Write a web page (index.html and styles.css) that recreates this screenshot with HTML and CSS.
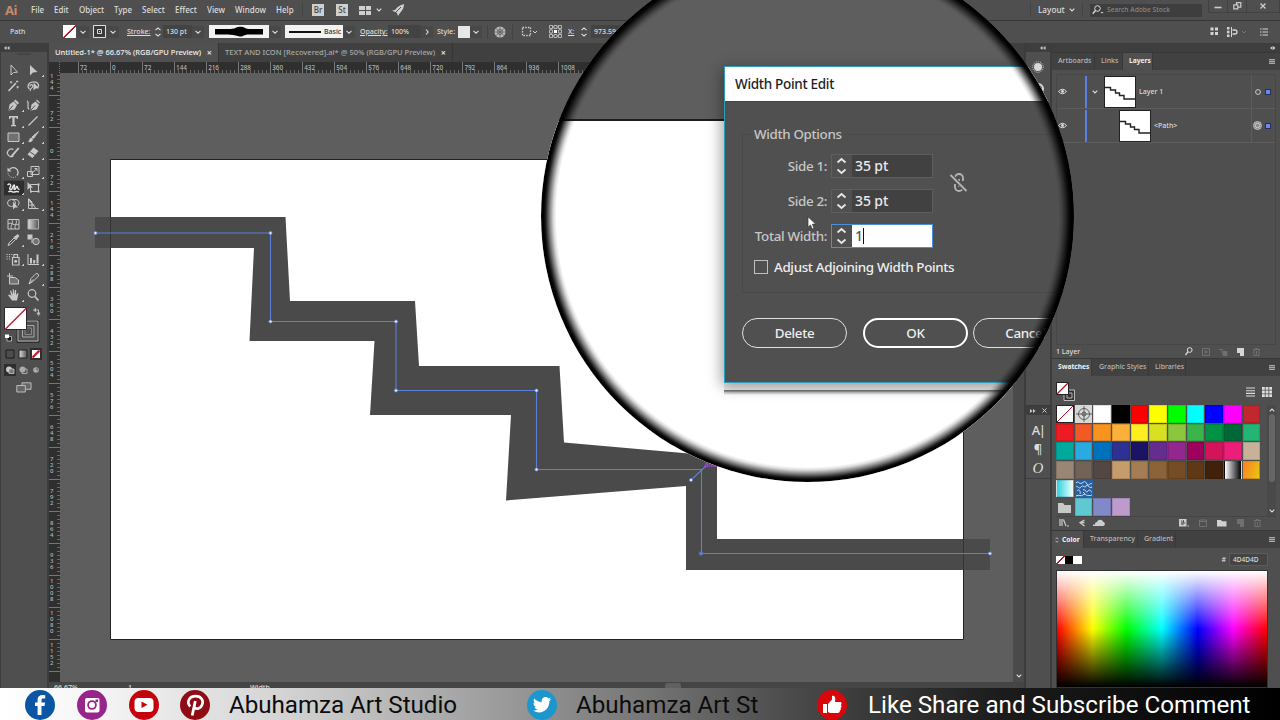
FILE: index.html
```html
<!DOCTYPE html>
<html lang="en">
<head>
	<meta charset="utf-8">
	<title>Untitled-1 - Illustrator</title>
	<link rel="stylesheet" href="styles.css">
</head>
<body>
<div class="app">

	<!-- menu bar -->
	<div class="menubar">
		<span class="logo">Ai</span>
		<span class="m-file">File</span>
		<span class="m-edit">Edit</span>
		<span class="m-object">Object</span>
		<span class="m-type">Type</span>
		<span class="m-select">Select</span>
		<span class="m-effect">Effect</span>
		<span class="m-view">View</span>
		<span class="m-window">Window</span>
		<span class="m-help">Help</span>
		<i class="sep"></i>
		<span class="app-badge">Br</span>
		<span class="app-badge">St</span>
		<svg class="arrange" width="12" height="9"><path d="M0 0h6v4H0zM0 5h6v4H0zM7 0h5v4H7zM7 5h5v4H7z" fill="#cfcfcf"/></svg>
		<svg class="chev" width="6" height="4"><path d="M.7.7L3 3 5.3.7"/></svg>
		<svg class="rocket" width="13" height="12"><path d="M12 0C8 1 5 3 3 6L0 6.500l3 1.500L5 9l1 3 2-3C11 6 12 3 12 0z" fill="#cfcfcf"/><path d="M3 9L9 3" stroke="#505050"/></svg>
		<div class="menu-right">
			<i class="sep"></i>
			<span class="layout">Layout</span>
			<svg class="chev" width="6" height="4"><path d="M.7.7L3 3 5.3.7"/></svg>
			<i class="sep"></i>
			<div class="search">
				<svg width="12" height="10"><circle cx="5.500" cy="3.500" r="2.800" fill="none" stroke="#ddd"/><path d="M3.500 5.500L.7 8.700" stroke="#ddd" stroke-width="1.300"/><path d="M8.500 7h3L10 8.600z" fill="#ddd"/></svg>
				<span>Search Adobe Stock</span>
			</div>
			<div class="win-btns">
				<b><svg width="8" height="8"><path d="M.5 5.500h7" stroke="#ccc" stroke-width="1.600"/></svg></b>
				<b><svg width="9" height="8"><path d="M.8 2.800h4v4h-4zM3.500 2.500V.7h4.300v4.500H5" fill="none" stroke="#ccc" stroke-width="1.200"/></svg></b>
				<b><svg width="8" height="8"><path d="M1.500 1.500l5 5m0-5l-5 5" stroke="#ccc" stroke-width="1.300"/></svg></b>
			</div>
		</div>
	</div>

	<!-- control bar -->
	<div class="control">
		<span class="c-path">Path</span>
		<div class="none-box c-fill"></div>
		<svg class="drop" width="12" height="12"><path d="M3.500 4.800L6 7.200l2.500-2.400"/></svg>
		<svg class="c-stroke" width="13" height="13"><path d="M.5.5h12v12H.5z" fill="#3a3a3a" stroke="#e0e0e0"/><path d="M4.500 4.500h4v4h-4zM6 6.500h1" fill="none" stroke="#ddd"/></svg>
		<svg class="drop" width="12" height="12"><path d="M3.500 4.800L6 7.200l2.500-2.400"/></svg>
		<u class="c-strokelabel">Stroke:</u>
		<svg class="spin" width="8" height="12"><path d="M1.500 4.200L4 2l2.500 2.200M1.500 7.800L4 10l2.500-2.200"/></svg>
		<span class="field c-pt">130 pt</span>
		<svg class="drop" width="12" height="12"><path d="M3.500 4.800L6 7.200l2.500-2.400"/></svg>
		<div class="profile"><svg width="48" height="11"><path d="M0 3h14c5 0 6-1 9-2 2-.5 3-.5 5 0 3 1 3 2 6 2h14v5.500H34c-3 0-4 .5-6 1.500-2 .8-3 .8-5 0-3-1-7-1-10-1.500H0z"/></svg></div>
		<svg class="drop" width="12" height="12"><path d="M3.500 4.800L6 7.200l2.500-2.400"/></svg>
		<div class="brush"><i></i><span>Basic</span></div>
		<svg class="drop" width="12" height="12"><path d="M3.500 4.800L6 7.200l2.500-2.400"/></svg>
		<u class="c-opacity">Opacity:</u>
		<span class="field c-pct">100%</span>
		<svg class="drop" width="12" height="12"><path d="M5 3.500L7.200 6 5 8.500"/></svg>
		<span class="c-style">Style:</span>
		<div class="style-box"></div>
		<svg class="drop" width="12" height="12"><path d="M3.500 4.800L6 7.200l2.500-2.400"/></svg>
		<i class="sep"></i>
		<svg class="globe" width="12" height="12"><circle cx="6" cy="6" r="5.500" fill="#bdbdbd"/><path d="M6 .5v11M.5 6h11M2 2.500l8 7M10 2.500l-8 7" stroke="#5a5a5a" stroke-width=".8"/><circle cx="6" cy="6" r="2.600" fill="none" stroke="#5a5a5a" stroke-width=".7"/></svg>
		<i class="sep"></i>
		<svg class="bounds" width="17" height="11"><path d="M1.500 1.500h8v8h-8z" fill="none" stroke="#d0d0d0" stroke-width="1.300" stroke-dasharray="1.500 1.200"/><path d="M12 5l2 2 2-2" fill="none" stroke="#d0d0d0"/></svg>
		<svg class="refpt" width="13" height="13"><path d="M2 2h9v9H2z" fill="none" stroke="#ccc" stroke-width=".8"/><g fill="#505050" stroke="#ccc" stroke-width=".8"><path d="M.5.5h3v3h-3zM5 .5h3v3H5zM9.500.5h3v3h-3zM.5 5h3v3h-3zM9.500 5h3v3h-3zM.5 9.500h3v3h-3zM5 9.500h3v3H5zM9.500 9.500h3v3h-3z"/></g><path d="M5 5h3v3H5z" fill="#fff"/></svg>
		<u class="c-x">X:</u>
		<svg class="spin" width="8" height="12"><path d="M1.500 4.200L4 2l2.500 2.200M1.500 7.800L4 10l2.500-2.200"/></svg>
		<span class="field c-xval">973.59</span>
		<div class="control-right">
			<svg width="9" height="9"><path d="M.5.5h3v3h-3zM5 .5h3v3H5zM.5 5h3v3h-3zM5 5h3v3H5z" fill="#d5d5d5"/></svg>
			<svg width="20" height="10"><path d="M0 0h2.500v2.500H0zM0 3.700h2.500v2.500H0zM0 7.400h2.500v2.500H0zM4 0h1v10H4z" fill="#d5d5d5"/><path d="M5.500 3H8a2 2 0 010 4H5.500" fill="none" stroke="#d5d5d5" stroke-width="1.300"/><path d="M15 4l2 2 2-2" fill="none" stroke="#777"/></svg>
			<svg width="9" height="8"><path d="M0 1h1.500M0 4h1.500M0 7h1.500M2.500 1H8M2.500 4H8M2.500 7H8" stroke="#d5d5d5"/></svg>
		</div>
	</div>

	<div class="main">

		<!-- toolbox -->
		<div class="tools">
			<div class="tools-head"><svg width="6" height="4"><path d="M2.500 0v4L0 2zM5.500 0v4L3 2z" fill="#ccc"/></svg></div>
			<div class="grip"></div>
			<div class="tool-group">
				<svg><path d="M6 3v10l2.500-2.500 4-.3z" fill="none" stroke="#c8c8c8"/></svg>
				<svg class="more"><path d="M5 3v10.500l3-3 4.500-.5z" fill="#c8c8c8"/></svg>
				<svg><path d="M3.500 13L11 5" stroke="#c8c8c8" stroke-width="1.600"/><path d="M6 3v2.500M5 4.200h2.500M12 2.500v2M11 3.500h2.500M12.500 8v2.500M11.500 9H14" stroke="#c8c8c8" stroke-width=".9"/></svg>
				<svg><path d="M4.500 11C2 9 2.500 4.500 8 4s7 4 4 6M5 8.500c0-3 4-2 2.500.5S4 11 5.500 13" fill="none" stroke="#c8c8c8" stroke-width="1.200"/><path d="M8.500 4.500v8l2-2 3.500-.3z" fill="#c8c8c8"/></svg>
			</div>
			<div class="tool-group">
				<svg class="more"><path d="M3.500 13.500l1-6 4-3 3.500 3.500-2.500 4.500z" fill="#c8c8c8"/><path d="M9 4l1.500-1.500 3.500 3.500-1.500 1.500z" fill="#c8c8c8"/><path d="M4 13l4-4.500" stroke="#4e4e4e"/></svg>
				<svg><path d="M5.500 13.500l1-6 4-3 3.500 3.500-2.500 4.500z" fill="#c8c8c8"/><path d="M6 13l4-4.500" stroke="#4e4e4e"/><path d="M2 4c3 1-1 6 2 8.500M11.500 3L14.500 6" fill="none" stroke="#c8c8c8" stroke-width="1.200"/></svg>
				<svg class="more"><path d="M4 3h9v3h-1.200l-.5-1.500H9.600V12H11v1.200H6V12h1.400V4.500H5.700L5.200 6H4z" fill="#c8c8c8"/></svg>
				<svg class="more"><path d="M3.500 12.500l9-9" stroke="#c8c8c8" stroke-width="1.200"/></svg>
				<svg class="more"><path d="M3 4h11v8.500H3z" fill="#707070" stroke="#c8c8c8"/></svg>
				<svg class="more"><path d="M13.500 2.500L8.500 9.500 7 8z" fill="#c8c8c8" stroke="#c8c8c8"/><path d="M6.500 8.500L8 10c0 3-3 3.500-5 3 1.500-1 .8-3.500 3.500-4.500z" fill="#c8c8c8"/></svg>
				<svg class="more"><path d="M8.500 11A4 3.800 0 118.500 4.500" fill="none" stroke="#c8c8c8" stroke-width="1.200"/><path d="M14.500 3.500L8 11l-2.500 2 .8-3L13 2.500z" fill="#c8c8c8"/></svg>
				<svg class="more"><path d="M8.500 2.500l5 3.500-6 7-5-3.500z" fill="#c8c8c8"/><path d="M5.200 7l5 3.500" stroke="#4e4e4e"/></svg>
			</div>
			<div class="tool-group">
				<svg class="more"><path d="M4.500 5.500A4.500 4.500 0 1112 11.500" fill="none" stroke="#c8c8c8" stroke-width="1.300"/><path d="M3 9a5 5 0 008 3.500" fill="none" stroke="#c8c8c8" stroke-dasharray="1.200 1.200"/><path d="M2.500 3.500v4h4z" fill="#c8c8c8"/></svg>
				<svg class="more"><path d="M6 2.500h8v8H6zM2.500 7.500h5v5h-5z" fill="none" stroke="#c8c8c8"/><path d="M7 9l5-4.500M9.500 4.500H12V7" fill="none" stroke="#c8c8c8"/></svg>
				<svg class="more selected"><path d="M2.500 5c2-2 4-.5 3 1.500S4 9.500 6 9.500 7.500 5 9 5s-1 4.500.5 4.500S11 6 12 6.500s0 3 2.500 3M3.500 12c2-2.500 4 1 6 0s3-.5 4.500 0" fill="none" stroke="#e8e8e8" stroke-width="1.400"/></svg>
				<svg><path d="M5.500 4.500h8v7h-8z" fill="none" stroke="#c8c8c8"/><path d="M12.500 3.500h2v2h-2zM12.500 10.500h2v2h-2zM5 10.500h2v2H5z" fill="#c8c8c8"/><path d="M2.500 2v8l2-2 3.500-.5z" fill="#c8c8c8"/></svg>
				<svg class="more"><ellipse cx="6.500" cy="7" rx="4" ry="3.500" fill="none" stroke="#c8c8c8"/><path d="M7 3.500h4a3.500 3.500 0 012 6" fill="none" stroke="#c8c8c8"/><path d="M8 5.500v8l2-2h3z" fill="#c8c8c8"/></svg>
				<svg class="more"><path d="M3.500 2.500v10h10M3.500 3l7 9M3.500 6h3.500M3.500 9h6M7 6v6.500M4 3l3 3" fill="none" stroke="#c8c8c8"/></svg>
			</div>
			<div class="tool-group">
				<svg><path d="M3 3.500h11v9.500H3zM3 8c3-3 6 3 11 0M6.500 3.500c3 3-2 6 0 9.500M10.500 3.500c3 3-2 6 0 9.500" fill="none" stroke="#c8c8c8"/></svg>
				<svg><defs><linearGradient id="g1"><stop offset="0" stop-color="#ddd"/><stop offset="1" stop-color="#555"/></linearGradient></defs><path d="M3 3.500h10.500v9.500H3z" fill="url(#g1)" stroke="#b0b0b0"/></svg>
				<svg class="more"><path d="M3 13.500l1-2.500 5-5 1.500 1.500-5 5z" fill="none" stroke="#c8c8c8"/><path d="M8.500 5L11 3.500l1.500-1.500 2 2L13 5.500l-1.500 2.500z" fill="#c8c8c8"/></svg>
				<svg><path d="M2.500 2.500h5v5h-5z" fill="#c8c8c8"/><path d="M6 6.500h4.500V11H6z" fill="#909090"/><circle cx="11" cy="9.500" r="3.200" fill="#707070" stroke="#c8c8c8"/></svg>
			</div>
			<div class="tool-group">
				<svg class="more"><path d="M7.500 6.500H14V14H7.500zM9 3.500h3.500v3H9z" fill="none" stroke="#c8c8c8" stroke-width="1.200"/><circle cx="10.700" cy="10.300" r="1.500" fill="#c8c8c8"/><path d="M1.500 3.500h6M1.500 5.700h5M1.500 8h4" stroke="#c8c8c8" stroke-dasharray="1.200 1.200"/></svg>
				<svg class="more"><path d="M3 3v10.500h11" fill="none" stroke="#c8c8c8"/><path d="M5 7h2v5.500H5zM8.200 9h2v3.500h-2zM11.500 3.500h2v9h-2z" fill="#c8c8c8"/></svg>
			</div>
			<div class="tool-group">
				<svg><path d="M4.500 2v6M2 5h6" stroke="#c8c8c8"/><path d="M4.500 6.500H10L13.500 9v4h-9z" fill="#737373" stroke="#c8c8c8"/></svg>
				<svg class="more"><path d="M4 13l2-5.500 5-5c1.500-.5 3 1 2.500 2.500l-5 5z" fill="#555" stroke="#c8c8c8"/><path d="M4 13l4-4.500" stroke="#c8c8c8"/></svg>
				<svg class="more"><path d="M5 7.500L3 8l4 5.500h5l1.500-7-1.300-.3L11 8.500 11.200 3H10l-.5 4.500L8.800 2.300H7.700l.3 5.500L6 3.500l-1 .3L6.500 9z" fill="#c8c8c8"/></svg>
				<svg><circle cx="7" cy="6.500" r="3.800" fill="none" stroke="#c8c8c8" stroke-width="1.200"/><path d="M9.800 9.500l3.700 4" stroke="#c8c8c8" stroke-width="1.700"/></svg>
			</div>
			<svg class="fill-stroke" width="42" height="38">
				<path d="M13 13.500h22v22H13z" fill="none" stroke="#222" stroke-width=".8"/><path d="M14 14h20v20H14z" fill="none" stroke="#aaa"/><path d="M18.500 18.500h11.500v11.500H18.500z" fill="none" stroke="#aaa"/><path d="M21 21h6.500v6.500H21z" fill="none" stroke="#888"/>
				<path d="M.5.500h22v22H.5z" fill="#fff" stroke="#2a2a2a"/><path d="M1 22.500L22.500 1" stroke="#b5142a" stroke-width="1.300"/>
				<path d="M31 3h3.500v4M29.500 3l2-1.500v3zM34.500 8.500L33 6h3z" fill="none" stroke="#c0c0c0"/>
				<path d="M3 29.500h4.500V34H3z" fill="#111" stroke="#ccc" stroke-width=".8"/><path d="M1 27.500h4V31H1z" fill="#fff"/>
			</svg>
			<div class="mode-row">
				<svg width="12" height="12"><path d="M2 2h8v8H2z" fill="#4d4d4d" stroke="#1c1c1c"/></svg>
				<svg width="12" height="12"><path d="M2 2h8v8H2z" fill="url(#g1)" stroke="#222"/></svg>
				<svg width="12" height="12" class="dark"><path d="M2 2h8v8H2z" fill="#fff"/><path d="M2.500 9.500l7-7" stroke="#c81e2c" stroke-width="2.400"/></svg>
			</div>
			<div class="mode-row">
				<svg width="12" height="12" class="dark"><circle cx="5" cy="5.500" r="3" fill="#c8c8c8"/><path d="M5 5h5v4.500H5z" fill="#777" stroke="#c8c8c8" stroke-width=".8"/></svg>
				<svg width="12" height="12"><path d="M5 5h5v4.500H5z" fill="none" stroke="#aaa"/><circle cx="5.500" cy="5.500" r="3" fill="#aaa"/></svg>
				<svg width="12" height="12"><circle cx="6" cy="6" r="2.800" fill="#aaa"/><path d="M5.500 4.500H8V7z" fill="#666"/></svg>
			</div>
			<svg class="screen-mode" width="16" height="11"><path d="M6 .8h9v6.500H6z" fill="#666" stroke="#bbb"/><path d="M.8 3.500h8.500v6.500H.8z" fill="#666" stroke="#bbb"/></svg>
		</div>

		<!-- document -->
		<div class="doc">
			<div class="tabs">
				<div class="tab active"><span>Untitled-1* @ 66.67% (RGB/GPU Preview)</span><b>×</b></div>
				<div class="tab second"><span>TEXT AND ICON [Recovered].ai* @ 50% (RGB/GPU Preview)</span><b>×</b></div>
			</div>
			<div class="hruler"><i class="corner"></i><div class="hruler-marks" id="hruler"></div></div>
			<div class="work">
				<div class="vruler" id="vruler"></div>
				<svg class="canvas" width="953" height="609" viewBox="60 73 953 609">
					<path d="M110.500 159.500h853v480h-853z" fill="#fff" stroke="#222"/>
					<path class="stairs" d="M95 217H285.500L290 301H415l4 65H559.500l4.500 76.500L717 456v83H990v31H686V486L506 500.500 511 415H370l4.500-74H249.500l4.500-93H95z"/>
					<path d="M110.500 217v31M963.500 539v31" stroke="#333"/>
					<path class="spine" d="M95.500 233H270.500V321.500H396V390.500H536.500V469.500H701.500V553.500H990M691 480l15-14"/>
					<g class="anchors">
						<circle cx="95.500" cy="233" r="1.600"/><circle cx="270.500" cy="233" r="1.600"/><circle cx="270.500" cy="321.500" r="1.600"/><circle cx="396" cy="321.500" r="1.600"/><circle cx="396" cy="390.500" r="1.600"/><circle cx="536.500" cy="390.500" r="1.600"/><circle cx="536.500" cy="469.500" r="1.600"/><circle cx="691" cy="480" r="1.600"/><circle cx="990" cy="553.500" r="1.600"/><circle class="solid" cx="701" cy="553.500" r="1.600"/>
					</g>
					<text class="hint" x="704" y="467">anchor</text>
				</svg>
				<div class="vscroll"><svg width="6" height="4"><path d="M.7.7L3 3 5.3.7"/></svg></div>
			</div>
			<div class="status">
				<span class="s-zoom">66.67%</span><span class="s-page">1</span><span class="s-tool">Width</span><i class="s-thumb"></i>
			</div>
		</div>

		<!-- collapsed dock -->
		<div class="dock">
			<div class="dock-head"><svg width="6" height="4"><path d="M2.500 0v4L0 2zM5.500 0v4L3 2z" fill="#ccc"/></svg></div>
			<div class="dock-top">
				<svg width="12" height="12"><circle cx="6" cy="6" r="4" fill="#d8d8d8"/><circle cx="6" cy="6" r="5.300" fill="none" stroke="#d8d8d8" stroke-dasharray="1 1.200"/></svg>
				<svg width="12" height="14"><circle cx="6" cy="7" r="5" fill="none" stroke="#d8d8d8" stroke-width="2"/></svg>
			</div>
			<div class="dock-head two"><svg width="6" height="4"><path d="M0 0v4l2.500-2zM3 0v4l2.500-2z" fill="#ccc"/></svg><svg width="5" height="5"><path d="M.5.5l4 4m0-4l-4 4" stroke="#ccc"/></svg></div>
			<div class="dock-type">
				<span class="atype">A|</span><span>¶</span><span class="otype">O</span>
			</div>
		</div>

		<!-- panels -->
		<div class="panels">
			<div class="panels-head"><svg width="6" height="4"><path d="M2.500 0v4L0 2zM3 0v4l2.500-2z" fill="#ccc"/></svg></div>
			<div class="ptabs layers-tabs">
				<span class="t1">Artboards</span><span class="t2">Links</span><span class="t3 on">Layers</span><i class="burger"></i>
			</div>
			<div class="layers">
				<div class="layer">
					<svg class="eye" width="9" height="7"><path d="M.5 3.500Q4.500-1 8.500 3.500 4.500 8 .5 3.500z" fill="none" stroke="#ddd"/><circle cx="4.500" cy="3.500" r="1.400" fill="#ddd"/></svg>
					<i class="lcolor"></i>
					<svg class="chev lchev" width="6" height="4"><path d="M.7.7L3 3 5.3.7"/></svg>
					<svg class="thumb" width="32" height="32"><path d="M0 10.500h5.500V13h5v3h4v2.500h4.500v3.500h12" fill="none" stroke="#222" stroke-width="1.400"/></svg>
					<span>Layer 1</span>
					<div class="target"><svg width="6" height="6"><circle cx="3" cy="3" r="2.400" fill="none" stroke="#ccc"/></svg><b></b></div>
				</div>
				<div class="layer child">
					<svg class="eye" width="9" height="7"><path d="M.5 3.500Q4.500-1 8.500 3.500 4.500 8 .5 3.500z" fill="none" stroke="#ddd"/><circle cx="4.500" cy="3.500" r="1.400" fill="#ddd"/></svg>
					<i class="lcolor"></i>
					<svg class="thumb" width="32" height="32"><path d="M0 10.500h5.500V13h5v3h4v2.500h4.500v3.500h12" fill="none" stroke="#222" stroke-width="1.400"/></svg>
					<span>&lt;Path&gt;</span>
					<div class="target"><svg width="9" height="9"><circle cx="4.500" cy="4.500" r="4" fill="#888" stroke="#ccc" stroke-width=".8"/><circle cx="4.500" cy="4.500" r="2.200" fill="none" stroke="#ddd" stroke-width=".8"/></svg><b></b></div>
				</div>
			</div>
			<div class="layers-foot">
				<span>1 Layer</span>
				<svg width="8" height="9"><circle cx="4.700" cy="3" r="2.400" fill="none" stroke="#ddd"/><path d="M3 4.700L.5 8" stroke="#ddd" stroke-width="1.300"/></svg>
				<svg width="8" height="8"><path d="M.5.5h7v7h-7zM3 3h2v2H3z" fill="none" stroke="#707070"/></svg>
				<svg width="9" height="8"><path d="M0 1.500h4M3 1v4M4 3.500h4v4H4z" fill="#707070" stroke="#707070"/></svg>
				<svg width="7" height="8"><path d="M0 0h7v8H3V5H0z" fill="#d5d5d5"/></svg>
				<svg width="7" height="8"><path d="M0 1.500h7M2.500 1V.5h2V1M1 2v5.500h5V2M3.500 3v3.500" fill="none" stroke="#707070"/></svg>
			</div>
			<div class="ptabs">
				<span class="t4 on">Swatches</span><span class="t5">Graphic Styles</span><span class="t6">Libraries</span><i class="burger"></i>
			</div>
			<div class="swatch-panel">
				<div class="swatch-top">
					<svg width="20" height="20"><path d="M8 8h10.500v10.500H8zM11 11h5v5h-5z" fill="#333" stroke="#bbb"/><path d="M.5.5h12v12H.5z" fill="#fff" stroke="#222"/><path d="M1 12L12 1" stroke="#b5142a" stroke-width="1.300"/></svg>
					<svg class="list-view" width="9" height="10"><path d="M0 1h9M0 3.700h9M0 6.400h9M0 9h9" stroke="#ddd" stroke-width="1.100"/></svg>
					<svg width="10" height="10"><path d="M0 0h2.800v2.800H0zM3.600 0h2.800v2.800H3.600zM7.200 0H10v2.800H7.200zM0 3.600h2.800v2.800H0zM3.600 3.600h2.800v2.800H3.600zM7.200 3.600H10v2.800H7.200zM0 7.200h2.800V10H0zM3.600 7.200h2.800V10H3.600zM7.200 7.200H10V10H7.200z" fill="#ddd"/></svg>
				</div>
				<div class="swatch-body">
					<div class="swatches" id="swatches"></div>
					<div class="sscroll"><svg width="6" height="4"><path d="M.7 3.300L3 1l2.300 2.300"/></svg><i></i><svg width="6" height="4"><path d="M.7.7L3 3 5.300.7"/></svg></div>
				</div>
				<div class="swatch-foot">
					<svg width="10" height="8"><path d="M1 0v7M3 0v7M4.500.5l2.500 6.500" stroke="#ccc" stroke-width="1.200"/><path d="M8 7h2" stroke="#ccc"/></svg>
					<svg width="8" height="8"><path d="M6.500 1L2 3.500 6.500 7M2 3.500h4.500" fill="none" stroke="#ccc" stroke-width="1.300"/></svg>
					<svg class="cloud" width="13" height="8"><path d="M4 7a2 2 0 010-4 3.300 3.300 0 016.200-.2A2.200 2.200 0 0110.500 7zM0 5.500h3V7H0z" fill="#ccc"/></svg>
					<svg width="10" height="8"><path d="M0 0h7.500v7.500H0z" fill="#ccc"/><path d="M2 2h1v3.500M4.500 1v3h2M2 5h3" fill="none" stroke="#555"/><path d="M8.500 7H10" stroke="#ccc"/></svg>
					<svg width="8" height="8"><path d="M.5 1h7v6.500h-7zM.5 2.500h7" fill="none" stroke="#707070"/></svg>
					<svg width="10" height="8"><path d="M0 1h4l1 1.200h4.500V7.500H0z" fill="#d0d0d0"/></svg>
					<svg width="7" height="8"><path d="M0 0h7v8H3V5H0z" fill="#707070"/></svg>
					<svg width="7" height="8"><path d="M0 1.500h7M2.500 1V.5h2V1M1 2v5.500h5V2M3.500 3v3.500" fill="none" stroke="#707070"/></svg>
				</div>
			</div>
			<div class="ptabs">
				<span class="t7 on"><svg width="4" height="6"><path d="M.5 2.200L2 .7l1.500 1.500M.5 3.800L2 5.300l1.500-1.500" fill="none" stroke="#ccc" stroke-width=".8"/></svg>Color</span><span class="t8">Transparency</span><span class="t9">Gradient</span><i class="burger"></i>
			</div>
			<div class="color-panel">
				<div class="color-top">
					<i class="c-none"></i><i class="c-black"></i><i class="c-white"></i>
					<span class="hash">#</span><span class="hex">4D4D4D</span>
				</div>
				<div class="spectrum"></div>
			</div>
		</div>
	</div>

	<!-- banner -->
	<div class="banner">
		<svg class="soc fb" width="30" height="30" viewBox="0 0 30 30"><circle cx="15" cy="15" r="15" fill="#0a56a4"/><path d="M16.500 25V16h3l.6-3.600h-3.600v-2.100c0-1.200.5-1.700 1.700-1.700h2V5.300c-4.600-.7-7.600.6-7.600 4.600v2.500H10V16h2.600v9z" fill="#fff"/></svg>
		<svg class="soc ig" width="30" height="30" viewBox="0 0 30 30"><circle cx="15" cy="15" r="15" fill="#98258a"/><rect x="8" y="8" width="14.500" height="14.500" rx="2" fill="#fff"/><circle cx="15" cy="15" r="4.800" fill="#98258a"/><circle cx="15" cy="15" r="3" fill="#fff"/><path d="M18.500 9.500h2.600v2.600h-2.600z" fill="#98258a"/></svg>
		<svg class="soc yt" width="30" height="30" viewBox="0 0 30 30"><circle cx="15" cy="15" r="15" fill="#c4040c"/><rect x="5.500" y="8" width="19" height="14" rx="4" fill="#fff"/><path d="M12.500 11.500v6.500l6-3.200z" fill="#c4040c"/></svg>
		<svg class="soc pin" width="30" height="30" viewBox="0 0 30 30"><circle cx="15" cy="15" r="15" fill="#8e0c14"/><path d="M12.200 25.500L15.300 11" stroke="#fff" stroke-width="2.800" fill="none"/><path d="M10.200 16.500C6 12 9.500 6.200 15.500 6.200s8.500 4.500 6.500 8.800-6.500 4.600-8 2" stroke="#fff" stroke-width="2.700" fill="none"/></svg>
		<span class="b1">Abuhamza Art Studio</span>
		<svg class="soc tw" width="30" height="30" viewBox="0 0 30 30"><circle cx="15" cy="15" r="15" fill="#1c96cc"/><path d="M6 20.500c2 .2 3.500-.3 4.700-1.200-1.600-.2-2.700-1-3.200-2.400h1.500c-1.700-.7-2.600-2-2.600-3.900l1.500.4C6.500 12 6.300 10.200 7.200 8.500c2 2.200 4.500 3.500 7.500 3.700-.6-5 4.500-6.500 6.700-3.700l2.400-.9-1.500 2.200 2-.5-1.900 2C22.600 20 14 25.500 6 20.500z" fill="#fff"/></svg>
		<span class="b2">Abuhamza Art St</span>
		<svg class="soc like" width="30" height="30" viewBox="0 0 30 30"><circle cx="15" cy="15" r="15" fill="#d90709"/><path d="M6 14h4v9H6zM11 14l4-4.500V6c2.500-1 4 1 3 6h5c2 0 2 2.500.7 3 1.300.8 1 2.700-.2 3 .8 1 .4 2.400-.8 2.600.4 1.400-.4 2.400-2 2.400H13l-2-1z" fill="#fff"/></svg>
		<span class="b3">Like Share and Subscribe Comment</span>
	</div>

	<!-- magnifier over the work area -->
	<div class="lens">
		<div class="lens-board"></div>
		<div class="lens-edge"></div>
		<div class="lens-line"></div>
		<div class="dialog">
			<div class="d-title">Width Point Edit</div>
			<div class="d-body">
				<fieldset class="d-set">
					<legend>Width Options</legend>
					<div class="d-row"><label>Side 1:</label><div class="d-input"><svg width="18" height="22"><path d="M5.500 7.500L9.500 4l4 3.500M5.500 14.500l4 3.500 4-3.500"/></svg><span>35 pt</span></div></div>
					<div class="d-row"><label>Side 2:</label><div class="d-input"><svg width="18" height="22"><path d="M5.500 7.500L9.500 4l4 3.500M5.500 14.500l4 3.500 4-3.500"/></svg><span>35 pt</span></div></div>
					<div class="d-row"><label>Total Width:</label><div class="d-input focus"><svg width="18" height="22"><path d="M5.500 7.500L9.500 4l4 3.500M5.500 14.500l4 3.500 4-3.500"/></svg><span>1<i></i></span></div></div>
					<div class="d-check"><i></i><span>Adjust Adjoining Width Points</span></div>
				</fieldset>
				<div class="d-btns"><b>Delete</b><b class="ok">OK</b><b class="cancel">Cancel</b></div>
			</div>
			<svg class="link" width="20" height="22"><path d="M6 8V6a4 4 0 018 0v3M6 12v3a4 4 0 008 0v-2M10 7v8" fill="none" stroke="#b5b5b5" stroke-width="1.800"/><path d="M1.500 3l16 16" stroke="#505050" stroke-width="4"/><path d="M1.500 3l16 16" stroke="#b5b5b5" stroke-width="1.800"/></svg>
		</div>
		<svg class="cursor" width="10" height="14"><path d="M1 .8v10.400l2.500-2.300L5.200 13l1.900-.8-1.700-3.900 3.300-.2z" fill="#fff" stroke="#333" stroke-width=".7"/></svg>
		<div class="lens-shade"></div>
	</div>
</div>
<script src="script.js"></script>
</body>
</html>
```

FILE: styles.css
```css
*{
	box-sizing: border-box;
}
body{
	margin: 0;
	background: #4f4f4f;
	overflow: hidden;
}
i, b{
	font-style: normal;
	font-weight: normal;
}
u{
	text-decoration: underline;
	text-decoration-thickness: .5px;
	text-underline-offset: 1px;
}
svg{
	display: block;
	flex: none;
}
.app{
	position: relative;
	display: flex;
	flex-direction: column;
	width: 1280px;
	height: 720px;
	overflow: hidden;
	background: #4f4f4f;
	color: #ddd;
	font-family: "Noto Sans", "Open Sans", sans-serif;
	font-size: 8px;
	font-weight: 500;
	line-height: 1;
	white-space: nowrap;
}
.chev path, .drop path, .spin path, .vscroll path, .sscroll path{
	fill: none;
	stroke: #ddd;
	stroke-width: 1.1;
}
.sep{
	width: 1px;
	height: 14px;
	background: #434343;
}

/* menu bar */
.menubar{
	display: flex;
	align-items: center;
	flex: none;
	height: 21px;
	padding-left: 5px;
	border-bottom: 1px solid #363636;
}
.logo{
	width: 26px;
	color: #c88a68;
	font: bold 13px/1 "Open Sans", sans-serif;
	letter-spacing: -.5px;
}
.m-file{ width: 23px; }
.m-edit{ width: 25px; }
.m-object{ width: 35px; }
.m-type{ width: 28px; }
.m-select{ width: 33px; }
.m-effect{ width: 32px; }
.m-view{ width: 28px; }
.m-window{ width: 41px; }
.m-help{ width: 26px; }
.app-badge{
	width: 12px;
	height: 12px;
	margin: 0 3px 0 9px;
	background: #cfcfcf;
	color: #444;
	font-size: 8px;
	line-height: 12px;
	text-align: center;
}
.arrange{ margin-left: 8px; }
.arrange + .chev{ margin-left: 5px; }
.rocket{ margin-left: 10px; }
.menu-right{
	display: flex;
	align-items: center;
	height: 20px;
	margin-left: auto;
}
.layout{
	width: 31px;
	margin-left: 7px;
	font-size: 8.2px;
}
.menu-right .chev{ margin-right: 7px; }
.search{
	display: flex;
	align-items: center;
	width: 112px;
	height: 13px;
	margin: 0 6px 0 7px;
	padding-left: 2px;
	background: #3e3e3e;
	color: #888;
	font-size: 6.7px;
}
.search span{ margin-left: 3px; }
.win-btns{
	display: flex;
	height: 13px;
	margin-bottom: 7px;
	border: 1px solid #424242;
	border-top: 0;
}
.win-btns b{
	display: flex;
	align-items: center;
	justify-content: center;
	width: 19px;
	border-right: 1px solid #424242;
}
.win-btns b:last-child{
	width: 32px;
	border: 0;
}

/* control bar */
.control{
	display: flex;
	align-items: center;
	flex: none;
	height: 22px;
	padding: 0 0 1px 10px;
	font-size: 7px;
}
.c-path{ width: 53px; }
.none-box{
	width: 13px;
	height: 13px;
	background: linear-gradient(135deg, #fff 46%, #b5142a 47%, #b5142a 54%, #fff 55%);
}
.drop{
	background: #484848;
}
.c-fill + .drop, .c-stroke + .drop{
	margin: 0 4px 0 1px;
}
.c-strokelabel{
	width: 27px;
	margin-left: 4px;
}
.field{
	height: 13px;
	padding-left: 3px;
	background: #434343;
	line-height: 13px;
}
.c-pt{ width: 29px; margin-left: 1px; }
.profile{
	display: flex;
	align-items: center;
	justify-content: center;
	width: 60px;
	height: 13px;
	margin-left: 5px;
	background: #f2f2f2;
}
.brush{
	display: flex;
	align-items: center;
	width: 58px;
	height: 13px;
	margin-left: 4px;
	background: #f2f2f2;
	color: #333;
	font-size: 7px;
}
.brush i{
	width: 32px;
	height: 2px;
	margin: 0 3px 0 4px;
	background: #111;
}
.c-opacity{
	width: 28px;
	margin-left: 5px;
}
.c-pct{ width: 33px; }
.c-style{
	width: 21px;
	margin-left: 4px;
}
.style-box{
	width: 12px;
	height: 12px;
	background: #e6e6e6;
}
.style-box + .drop{ margin-right: 5px; }
.globe{ margin: 0 6px; }
.bounds{ margin-left: 8px; }
.refpt{ margin-left: 11px; }
.c-x{
	width: 12px;
	margin-left: 6px;
}
.c-xval{ width: 45px; margin-left: 3px; }
.control-right{
	display: flex;
	align-items: center;
	gap: 8px;
	margin: 0 11px 0 auto;
}
.control-right svg:last-child{ margin-left: 5px; }

.main{
	display: flex;
	flex: none;
	height: 645px;
}

/* toolbox */
.tools{
	width: 49px;
	flex: none;
	border-left: 1px solid #3c3c3c;
	border-right: 2px solid #3c3c3c;
}
.tools-head, .dock-head, .panels-head{
	display: flex;
	align-items: center;
	height: 9px;
	background: #3e3e3e;
}
.tools-head{ padding-left: 3px; }
.grip{
	width: 14px;
	height: 2px;
	margin: 1px 0 7px 16px;
	background: #444;
}
.tool-group{
	display: grid;
	grid-template-columns: 20px 20px;
	margin: 0 0 3px 3px;
}
.tool-group svg{
	width: 20px;
	height: 16px;
	padding-left: 1px;
}
.tool-group .more{
	background: linear-gradient(135deg, transparent 50%, #c8c8c8 50%) 18px 13px / 2px 2px no-repeat;
}
.tool-group .selected{
	background-color: #2e2e2e;
	box-shadow: inset 0 1px #444, inset 0 -1px #444;
}
.tool-group:nth-of-type(5), .tool-group:nth-of-type(7){
	margin-bottom: 4px;
}
.fill-stroke{
	margin: 4px 0 0 3px;
}
.mode-row{
	display: flex;
	gap: 1px;
	margin: 3px 0 4px 3px;
}
.fill-stroke + .mode-row{ margin-top: 3px; }
.mode-row .dark{ background: #2e2e2e; }
.screen-mode{ margin: 6px 0 0 15px; }

/* document */
.doc{
	display: flex;
	flex-direction: column;
	width: 975px;
	flex: none;
}
.tabs{
	display: flex;
	height: 19px;
	background: #404040;
	color: #a8a8a8;
}
.tab{
	display: flex;
	align-items: center;
	justify-content: space-between;
	width: 234px;
	padding: 0 6px 0 6px;
	border-right: 1px solid #363636;
	font-size: 7.55px;
}
.tab b{
	color: #ddd;
	font-size: 9px;
	font-weight: bold;
}
.tab.active{
	width: 170px;
	background: #505050;
	color: #f0f0f0;
	font-size: 7.5px;
}
.hruler{
	display: flex;
	height: 11px;
	background: #2f2f2f;
}
.corner{
	width: 11px;
	border-right: 1px dotted #777;
}
.hruler-marks{
	display: flex;
	width: 935px;
	height: 11px;
	margin-left: 18px;
	overflow: hidden;
}
.htick{
	width: 32.04px;
	height: 11px;
	flex: none;
	padding: 2px 0 0 1px;
	border-left: 1px solid #777;
	background: repeating-linear-gradient(90deg, transparent 0 3px, #666 3px 4px) 0 bottom / 100% 3px no-repeat;
	color: #b4b4b4;
	font-size: 6.3px;
	line-height: 7px;
}
.work{
	display: flex;
	height: 609px;
}
.vruler{
	width: 11px;
	height: 609px;
	flex: none;
	overflow: hidden;
	background: #2f2f2f;
}
.vtick{
	display: flex;
	flex-direction: column;
	justify-content: flex-end;
	height: 32px;
	padding: 0 0 5px 1px;
	border-bottom: 1px solid #777;
	background: repeating-linear-gradient(0deg, transparent 0 3px, #666 3px 4px) right 0 / 3px 100% no-repeat;
	color: #b4b4b4;
	font-size: 6px;
	line-height: 6px;
}
.vtick:first-child{
	height: 23px;
	padding-bottom: 4px;
}
.canvas{
	background: #5e5e5e;
}
.stairs{ fill: #4a4a4a; }
.spine{
	fill: none;
	stroke: #5b7fd6;
	stroke-width: 1.1;
}
.anchors{
	fill: #e8efff;
	stroke: #5b7fd6;
	stroke-width: .8;
}
.anchors .solid{ fill: #5b7fd6; }
.hint{
	fill: #d23fd0;
	font-size: 7px;
}
.vscroll{
	display: flex;
	align-items: flex-end;
	justify-content: center;
	width: 11px;
	padding-bottom: 4px;
	background: #4a4a4a;
}
.status{
	display: flex;
	height: 6px;
	overflow: hidden;
	background: #454545;
	font-size: 7px;
	line-height: 11px;
}
.s-zoom{ width: 75px; padding-left: 5px; }
.s-page{ width: 121px; padding-left: 4px; }
.s-tool{ width: 372px; padding-left: 5px; }
.s-thumb{
	width: 16px;
	height: 6px;
	margin: 1px 0 0 48px;
	border-radius: 3px 3px 0 0;
	background: #606060;
}

/* collapsed dock */
.dock{
	width: 28px;
	flex: none;
	border-left: 2px solid #3c3c3c;
	border-right: 2px solid #3c3c3c;
}
.dock-head{
	justify-content: flex-end;
	padding-right: 4px;
}
.dock-top{
	display: flex;
	flex-direction: column;
	align-items: center;
	gap: 9px;
	height: 354px;
	padding-top: 9px;
	border-bottom: 1px solid #3a3a3a;
}
.dock-head.two{
	justify-content: space-between;
	padding: 0 3px 0 4px;
}
.dock-type{
	display: flex;
	flex-direction: column;
	align-items: center;
	height: 64px;
	padding-top: 6px;
	border-bottom: 1px solid #3e3e3e;
	color: #ddd;
	font-size: 13px;
	line-height: 19px;
}
.dock-type .atype{
	letter-spacing: -1.5px;
}
.dock-type .otype{
	font-family: "Liberation Serif", serif;
	font-style: italic;
	font-size: 15px;
}

/* panels */
.panels{
	width: 228px;
	flex: none;
}
.panels-head{
	justify-content: flex-end;
	padding-right: 4px;
}
.ptabs{
	display: flex;
	height: 18px;
	background: #414141;
	color: #b8b8b8;
	font-size: 7px;
	line-height: 16px;
	border-top: 1px solid #383838;
}
.layers-tabs{
	line-height: 15px;
}
.ptabs span{
	padding-left: 6px;
	border-right: 1px solid #393939;
}
.ptabs .on{
	background: #505050;
	color: #f0f0f0;
	font-weight: bold;
	font-size: 6.7px;
}
.ptabs .t1{ width: 43px; }
.ptabs .t2{ width: 28px; }
.ptabs .t3{ width: 30px; }
.ptabs .t4{ width: 40px; }
.ptabs .t5{ width: 57px; padding-left: 7px; }
.ptabs .t6{ width: 37px; }
.ptabs .t7{ display: flex; align-items: center; gap: 3px; width: 32px; padding-left: 3px; }
.ptabs .t8{ width: 54px; }
.ptabs .t9{ width: 38px; }
.burger{
	width: 6px;
	height: 5px;
	margin: 6px 5px 0 auto;
	background: repeating-linear-gradient(#aaa 0 1px, #666 1px 2px);
}
.layers{
	height: 271px;
	margin: 4px 4px 0;
	border: 1px solid #474747;
}
.layer{
	display: flex;
	align-items: center;
	height: 34px;
	border-bottom: 1px solid #5c5c5c;
	font-size: 7px;
}
.eye{
	width: 10px;
	margin: 0 0 0 1px;
}
.lcolor{
	width: 2px;
	height: 32px;
	margin-left: 17px;
	background: #5a80e8;
}
.lchev{ margin: 0 6px 0 5px; }
.child .thumb{ margin-left: 32px; }
.layer .thumb{
	border: 1px solid #222;
	background: #fff;
}
.layer > span{ margin-left: 3px; }
.target{
	display: flex;
	align-items: center;
	justify-content: flex-end;
	gap: 4px;
	width: 24px;
	height: 33px;
	margin-left: auto;
	padding-right: 4px;
	border-left: 1px solid #5c5c5c;
}
.target b{
	width: 6px;
	height: 6px;
	border: 1px solid #23305c;
	background: #6c88f0;
}
.child .target{ gap: 3px; }
.layers-foot{
	display: flex;
	align-items: center;
	gap: 9px;
	height: 13px;
	padding: 0 20px 0 4px;
	font-size: 7px;
}
.layers-foot span{ margin-right: auto; }
.swatch-panel{
	height: 154px;
	padding: 6px 4px 0 4px;
}
.swatch-top{
	display: flex;
	align-items: center;
	height: 23px;
	padding-bottom: 3px;
}
.list-view{
	margin: 0 7px 0 auto;
}
.swatch-top svg:last-child{ margin-right: 4px; }
.swatch-body{
	display: flex;
	justify-content: space-between;
	height: 111px;
}
.swatches{
	display: grid;
	grid-template-columns: repeat(11, 17.7px);
	grid-auto-rows: 17.7px;
	gap: .97px;
	align-content: start;
	height: 111px;
}
.swatch{
	border: 1px solid rgba(0, 0, 0, .12);
}
.swatch.none{
	border: 1px solid #222;
	background: linear-gradient(135deg, #fff 47%, #b5142a 48%, #b5142a 52%, #fff 53%);
}
.swatch.blank{
	visibility: hidden;
}
.swatch.folder{
	padding: 5px 0 0 2px;
	border: 0;
}
.swatch.reg{
	border: 0;
	background: #d8d8d8;
}
.swatch.pattern{
	border: 0;
}
.swatch.dots{
	background: radial-gradient(circle, rgba(255, 255, 255, .7) 35%, transparent 40%) 0 0 / 2px 2px, linear-gradient(90deg, #2bd2e0, #f4ffff);
}
.sscroll{
	display: flex;
	flex-direction: column;
	align-items: center;
	justify-content: space-between;
	width: 9px;
	padding: 3px 0;
	background: #494949;
}
.sscroll i{
	width: 6px;
	height: 68px;
	margin-bottom: 26px;
	border-radius: 3px;
	background: #666;
}
.swatch-foot{
	display: flex;
	align-items: center;
	gap: 10px;
	height: 13px;
	padding: 0 15px 0 3px;
	border-top: 1px solid #454545;
}
.swatch-foot svg:nth-child(2){ margin-left: -1px; }
.cloud{ margin: 0 auto 0 -3px; }
.color-panel{
	padding: 5px 4px 0;
}
.color-top{
	display: flex;
	align-items: center;
	height: 13px;
}
.color-top i{
	width: 8.5px;
	height: 8px;
}
.c-none{ background: linear-gradient(135deg, #fff 42%, #b5142a 43%, #b5142a 57%, #fff 58%); }
.c-black{ background: #000; }
.c-white{ background: #fff; }
.hash{
	margin-left: auto;
	font-size: 7px;
}
.hex{
	width: 39px;
	height: 13px;
	margin: 0 8px 0 3px;
	padding-left: 3px;
	border: 1px solid #5c5c5c;
	background: #444;
	font-size: 6.5px;
	line-height: 11px;
}
.spectrum{
	width: 212px;
	height: 118px;
	margin-top: 4px;
	border: 1px solid #333;
	background:
		linear-gradient(#fff, rgba(255, 255, 255, 0) 50%, rgba(0, 0, 0, 0) 50%, #000),
		linear-gradient(90deg, #f00, #ff0 17%, #0f0 33%, #0ff 50%, #00f 67%, #f0f 84%, #f00);
}

/* banner */
.banner{
	display: flex;
	align-items: center;
	flex: none;
	height: 32px;
	padding-left: 25px;
	background: linear-gradient(90deg, #fff 0, #f4f4f4 8%, #d4d4d4 22%, #a2a2a2 37%, #777 50%, #4a4a4a 62%, #1c1c1c 78%, #000 100%);
	color: #0c0c0c;
	font: 24.2px/32px Roboto, sans-serif;
}
.soc{ margin-top: 1px; }
.ig{ margin-left: 22px; }
.yt{ margin-left: 22px; }
.pin{ margin-left: 21px; }
.b1{
	width: 298px;
	margin: 2px 0 0 19px;
	letter-spacing: -.05px;
}
.b2{
	width: 241px;
	margin: 2px 0 0 19px;
}
.b3{
	margin: 2px 0 0 21px;
	color: #fff;
}

/* magnifier */
.lens{
	position: absolute;
	left: 541px;
	top: -50px;
	width: 533px;
	height: 532px;
	border-radius: 50%;
	overflow: hidden;
	background: #5e5e5e;
}
.lens-board{
	position: absolute;
	left: 0;
	top: 169px;
	width: 471px;
	height: 364px;
	border-top: 2px solid #1c1c1c;
	background: #fff;
}
.lens-edge{
	position: absolute;
	left: 471px;
	top: 300px;
	width: 62px;
	height: 233px;
	background: #5e5e5e;
}
.lens-line{
	position: absolute;
	left: 183px;
	top: 432px;
	width: 350px;
	height: 16px;
	border-top: 8px solid #ededed;
	background: linear-gradient(#777 0 1px, #b5b5b5 2px, #fff 5px);
}
.lens-shade{
	position: absolute;
	inset: 0;
	border-radius: 50%;
	background: radial-gradient(circle, transparent 251px, rgba(0, 0, 0, .14) 254px, rgba(0, 0, 0, .5) 258px, rgba(0, 0, 0, .9) 262px, #000 264px);
}
.cursor{
	position: absolute;
	left: 266px;
	top: 266px;
}
.dialog{
	position: absolute;
	left: 183px;
	top: 116px;
	width: 400px;
	height: 317px;
	border: 1.5px solid #2d9dbb;
	background: #505050;
	box-shadow: -2px 3px 14px rgba(0, 0, 0, .4);
	color: #c6c6c6;
	font-family: "Noto Sans", sans-serif;
	font-size: 13.4px;
	letter-spacing: -.35px;
}
.d-title{
	height: 35px;
	padding-left: 10px;
	border-bottom: 1px solid #444;
	background: #fff;
	color: #1c1c28;
	font-size: 13.5px;
	letter-spacing: -.3px;
	line-height: 35px;
}
.d-body{
	padding: 26px 0 0 17px;
}
.d-set{
	width: 340px;
	height: 165px;
	margin: 0;
	padding: 13px 0 0 11px;
	border: 1px solid #494949;
}
.d-set legend{
	margin-left: -3px;
	padding: 0 3px;
}
.d-row{
	display: flex;
	align-items: center;
	height: 24px;
	margin-bottom: 11px;
}
.d-row label{
	width: 73px;
	text-align: right;
	margin-right: 4px;
}
.d-input{
	display: flex;
	align-items: center;
	width: 102px;
	height: 24px;
	border: 1px solid #5e5e5e;
	color: #eaeaea;
	font-size: 14px;
	letter-spacing: -.1px;
}
.d-input path{
	fill: none;
	stroke: #e8e8e8;
	stroke-width: 1.8;
}
.d-input span{
	flex: 1;
	height: 22px;
	margin-left: 2px;
	padding-left: 3px;
	background: #414141;
	line-height: 22px;
}
.d-input.focus{
	border: 1.5px solid #4a90d9;
}
.focus span{
	display: flex;
	align-items: center;
	background: #fff;
	color: #555;
}
.focus i{
	width: 1px;
	height: 16px;
	background: #111;
}
.d-check{
	display: flex;
	align-items: center;
	margin-top: -2px;
	height: 20px;
	color: #eee;
}
.d-check i{
	width: 14px;
	height: 14px;
	margin-right: 6px;
	border: 1px solid #c0c0c0;
}
.d-btns{
	display: flex;
	margin-top: 25px;
}
.d-btns b{
	width: 105px;
	height: 30px;
	margin-right: 16px;
	border: 1.5px solid #e0e0e0;
	border-radius: 15px;
	color: #eee;
	font-weight: 500;
	line-height: 28px;
	text-align: center;
}
.d-btns .ok{
	margin-right: 5px;
	border: 2px solid #fff;
	line-height: 26px;
}
.link{
	position: absolute;
	left: 224px;
	top: 105px;
}
```

FILE: script.js
```javascript
!function(){
	var h = document.getElementById('hruler'), v = document.getElementById('vruler'),
		sw = document.getElementById('swatches'), i, html = '';

	// top ruler: 72pt steps from -72
	for(i = -1; i < 28; i++){
		html += '<div class="htick">' + Math.abs(i * 72) + '</div>';
	}
	h.innerHTML = html;

	// left ruler, digits stacked
	html = '';
	for(i = -2; i < 17; i++){
		html += '<div class="vtick">' + String(Math.abs(i * 72)).split('').map(function(n){
			return '<span>' + n + '</span>';
		}).join('') + '</div>';
	}
	v.innerHTML = html;

	var colors = [
		'none','reg','#fff','#000','#f00','#ff0','#0f0','#0ff','#00f','#f0f','#c1272d',
		'#ed1c24','#f15a24','#f7931e','#fbb03b','#fcee21','#d9e021','#8cc63f','#39b54a','#009245','#006837','#22b573',
		'#00a99d','#29abe2','#0071bc','#2e3192','#1b1464','#662d91','#93278f','#9e005d','#d4145a','#ed1e79','#c7b299',
		'#998675','#736357','#534741','#c69c6d','#a67c52','#8c6239','#754c24','#603813','#42210b',
		'linear-gradient(90deg,#fff,#000)','linear-gradient(110deg,#f7821e,#e8c814)',
		'dots','pattern','blank','blank','blank','blank','blank','blank','blank','blank','blank',
		'folder','#5fc8d2','#8289c8','#bd9bcc'
	];
	var art = {
		reg:'<svg width="18" height="18"><circle cx="9" cy="9" r="5.500" fill="none" stroke="#444" stroke-width=".8"/><circle cx="9" cy="9" r="2" fill="none" stroke="#444" stroke-width=".8"/><path d="M9 1v16M1 9h16" stroke="#444" stroke-width=".8"/></svg>',
		pattern:'<svg width="18" height="18"><path d="M0 0h18v18H0z" fill="#2c5f9e"/><path d="M1 3c3-3 3 2 6 0s3-2 5 1 3-2 5 0M1 7c2-2 3 3 5 0s4 2 5-1 3 3 6 1M2 11c2-3 4 1 3 3M8 10c3-2 2 4 5 1s2 1 4 1M1 16c3-2 5 1 7-1s4 2 9 0M8 12l2 2" fill="none" stroke="#cfe2f2" stroke-width="1"/></svg>',
		folder:'<svg width="14" height="10"><path d="M0 0h5l1.500 2H13v8H0z" fill="#c8c8c8"/></svg>'
	};
	html = '';
	colors.forEach(function(c){
		if(c.charAt(0) == '#' || c.indexOf('gradient') > -1){
			html += '<div class="swatch" style="background:' + c + '"></div>';
		}else{
			html += '<div class="swatch ' + c + '">' + (art[c] || '') + '</div>';
		}
	});
	sw.innerHTML = html;
}();
```
